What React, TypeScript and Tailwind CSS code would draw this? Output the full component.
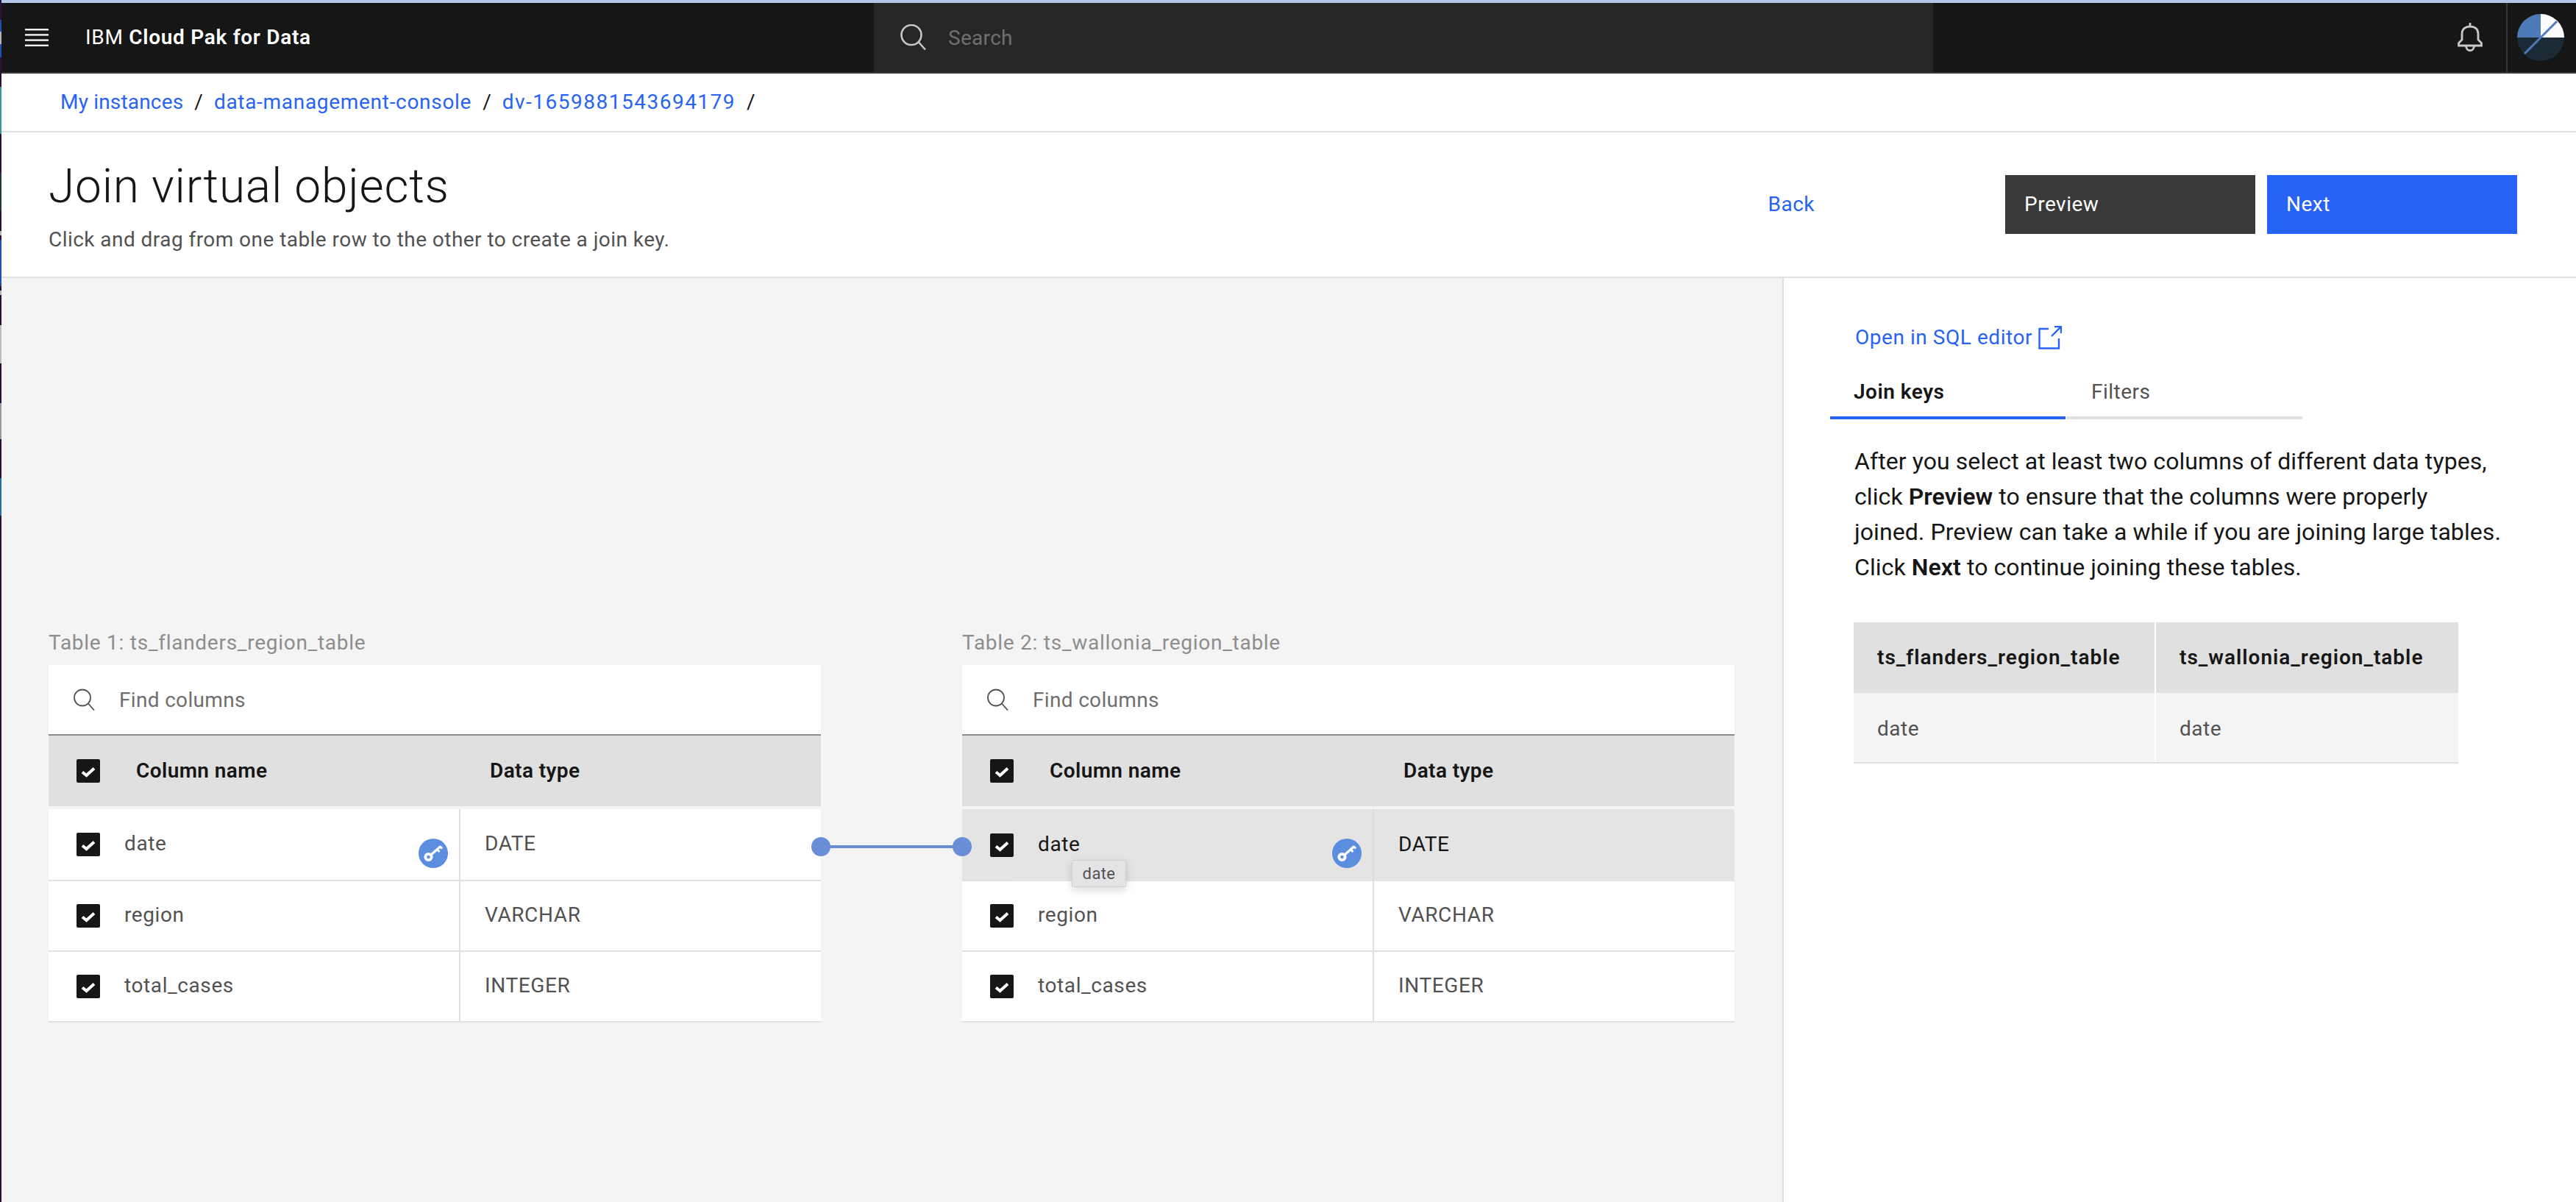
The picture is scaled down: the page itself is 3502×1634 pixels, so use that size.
const font = { fontFamily: '"Roboto", "Liberation Sans", sans-serif' };

// sliver of the desktop showing behind the window, top to bottom
const desktopStrip = [
  ["h-[27px]", "bg-[#2a1040]"],
  ["h-[16px]", "bg-[#1d4fb5]"],
  ["h-[17px]", "bg-[#b5b5b5]"],
  ["h-[18px]", "bg-[#1d4fb5]"],
  ["h-[40px]", "bg-[#2a1040]"],
  ["h-[64px]", "bg-[#3a9a9a]"],
  ["h-[53px]", "bg-[#2a1040]"],
  ["h-[51px]", "bg-[#1f3a3a]"],
  ["h-[28px]", "bg-[#2a1040]"],
  ["h-[6px]", "bg-[#b5b5b5]"],
  ["h-[6px]", "bg-[#2a1040]"],
  ["h-[63px]", "bg-[#1d4fb5]"],
  ["h-[6px]", "bg-[#2a1040]"],
  ["h-[6px]", "bg-[#b5b5b5]"],
  ["h-[41px]", "bg-[#2a1040]"],
  ["h-[52px]", "bg-[#bdbdbd]"],
  ["h-[54px]", "bg-[#2a1040]"],
  ["h-[49px]", "bg-[#9a9a9a]"],
  ["h-[53px]", "bg-[#2a1040]"],
  ["h-[51px]", "bg-[#2070b0]"],
];

function Check() {
  return (
    <span className="size-8 shrink-0 rounded-[2px] bg-[#161616]">
      <svg width="32" height="32" viewBox="0 0 32 32" fill="none">
        <path d="M8 17.5 L13.5 22 L24 12.5" stroke="#fff" strokeWidth="4" />
      </svg>
    </span>
  );
}

function KeyBadge() {
  return (
    <span className="absolute left-[503px] top-[40px] size-10 rounded-full bg-[#5b8ede]">
      <svg width="40" height="40" viewBox="0 0 40 40" fill="none" stroke="#fff">
        <circle cx="13.5" cy="25" r="4.2" strokeWidth="3.8" />
        <path d="M17 22 L30 10.5" strokeWidth="3.2" />
        <path d="M25 14.5 L28.5 18 M29 10.5 L32 13.5" strokeWidth="3" />
      </svg>
    </span>
  );
}

function DataRow({ name, type, selected, keyed, first }: { name: string; type: string; selected?: boolean; keyed?: boolean; first?: boolean }) {
  return (
    <div className={`relative flex ${first ? "h-[98px]" : "h-[96px]"} ${selected ? "bg-[#e4e4e4] text-[#161616]" : "border-b-2 border-[#e0e0e0] bg-white text-[#525252]"}`}>
      <div className={`flex w-[560px] items-center border-r-2 pl-[38px] ${selected ? "border-[#dcdcdc]" : "border-[#e0e0e0]"}`}>
        <Check />
        <span className="ml-[33px] -translate-y-px text-[28px] tracking-[0.6px]">{name}</span>
      </div>
      <span className="ml-[33px] flex -translate-y-px items-center text-[28px] tracking-[0.6px]">{type}</span>
      {keyed && <KeyBadge />}
      {selected && <span className="absolute bottom-0 left-0 h-[2px] w-[70px] bg-[#e0e0e0]" />}
    </div>
  );
}

function JoinTable({ label, selected }: { label: string; selected?: boolean }) {
  return (
    <div className="w-[1050px]">
      <div className="h-[58px] pt-[10px] text-[28px] leading-[36px] tracking-[0.73px] text-[#8d8d8d]">{label}</div>
      <div className="flex h-[96px] items-center border-b-2 border-[#8d8d8d] bg-white pl-[33px]">
        <svg width="30" height="30" viewBox="0 0 30 30" fill="none" stroke="#525252" strokeWidth="1.8">
          <circle cx="13" cy="12.5" r="11" />
          <path d="M21 20.5 L29 29.5" />
        </svg>
        <span className="ml-[33px] translate-y-px text-[28px] tracking-[0.33px] text-[#6f6f6f]">Find columns</span>
      </div>
      <div className="flex h-[96px] items-center bg-[#e0e0e0] pl-[38px] text-[28px] font-semibold tracking-[0.4px] text-[#161616]">
        <Check />
        <span className="ml-[49px] w-[481px]">Column name</span>
        <span>Data type</span>
      </div>
      <div className="h-1" />
      <DataRow name="date" type="DATE" keyed first selected={selected} />
      <DataRow name="region" type="VARCHAR" />
      <DataRow name="total_cases" type="INTEGER" />
    </div>
  );
}

export default function App() {
  return (
    <div className="relative flex h-[1634px] w-[3502px] flex-col overflow-hidden bg-white text-[#161616]" style={font}>
      <div className="absolute left-0 top-0 z-10 flex h-full w-[2px] flex-col bg-[#2a1040]">
        {desktopStrip.map(([h, bg], i) => (
          <span key={i} className={`${h} ${bg}`} />
        ))}
      </div>
      <div className="h-1 bg-[#b4c6e6]" />
      <header className="flex h-[96px] items-stretch border-b-2 border-[#393939] bg-[#161616] text-white">
        <div className="flex w-[116px] items-center pl-[34px]">
          <svg width="32" height="24" viewBox="0 0 32 24" fill="#f4f4f4">
            <rect y="0" width="32" height="2.4" />
            <rect y="7.2" width="32" height="2.4" />
            <rect y="14.4" width="32" height="2.4" />
            <rect y="21.6" width="32" height="2.4" />
          </svg>
        </div>
        <div className="flex w-[1072px] items-center text-[28px] tracking-[0.7px]">
          IBM&nbsp;<span className="font-semibold">Cloud Pak for Data</span>
        </div>
        <div className="flex w-[1440px] items-center bg-[#262626] pl-[35px] text-[#6f6f6f]">
          <svg width="36" height="36" viewBox="0 0 36 36" fill="none" stroke="#c6c6c6" strokeWidth="2.6">
            <circle cx="16" cy="14.5" r="13.5" />
            <path d="M25.5 24 L35 34.5" />
          </svg>
          <span className="ml-[30px] translate-y-px text-[28px] tracking-[0.3px]">Search</span>
        </div>
        <div className="flex w-[779px] items-center pl-[713px]">
          <svg width="34" height="40" viewBox="0 0 34 40" fill="none" stroke="#c8c8c8" strokeWidth="2.8">
            <path d="M17 0 V5 M1.5 31 V27.5 L6 23 V15 C6 8 11 5 17 5 C23 5 28 8 28 15 V23 L32.5 27.5 V31 Z" />
            <path d="M11.5 31 C11.5 40 22.5 40 22.5 31" />
          </svg>
        </div>
        <div className="flex flex-1 items-center border-l-2 border-[#393939] pl-[13px]">
          <svg width="64" height="64" viewBox="0 0 64 64">
            <defs>
              <clipPath id="pie"><circle cx="32" cy="32" r="32" /></clipPath>
            </defs>
            <g clipPath="url(#pie)">
              <rect width="32" height="32" fill="#4f7ab8" />
              <rect x="32" width="32" height="32" fill="#fcfcfc" />
              <rect y="32" width="64" height="32" fill="#1b2a35" />
              <path d="M54 10 L10 54" stroke="#4f7ab8" strokeWidth="3" />
            </g>
          </svg>
        </div>
      </header>

      <nav className="flex h-[80px] items-center border-b-2 border-[#e0e0e0] pl-[82px] text-[28px]">
        <span className="tracking-[0.18px] text-[#2763f6]">My instances</span>
        <span className="mx-[15px]">/</span>
        <span className="tracking-[0.7px] text-[#2763f6]">data-management-console</span>
        <span className="mx-[15px]">/</span>
        <span className="tracking-[1.5px] text-[#2763f6]">dv-1659881543694179</span>
        <span className="mx-[15px]">/</span>
      </nav>

      <section className="flex h-[198px] items-start border-b-2 border-[#e0e0e0]">
        <div className="flex-1 pl-[66px] pt-[35px]">
          <h1 className="text-[64px] font-light leading-[78px] tracking-[0.75px]">Join virtual objects</h1>
          <p className="mt-[15px] text-[28px] leading-[36px] tracking-[0.45px] text-[#525252]">
            Click and drag from one table row to the other to create a join key.
          </p>
        </div>
        <div className="flex items-center pr-[80px] pt-[58px] text-[28px] tracking-[0.5px]">
          <span className="mr-[259px] text-[#2763f6]">Back</span>
          <span className="flex h-[80px] w-[340px] items-center bg-[#393939] pl-[26px] text-white">Preview</span>
          <span className="ml-[16px] flex h-[80px] w-[340px] items-center bg-[#2763f6] pl-[26px] text-white">Next</span>
        </div>
      </section>

      <main className="flex flex-1">
        <div className="relative flex w-[2425px] gap-[192px] border-r-2 border-[#e0e0e0] bg-[#f4f4f4] pl-[66px] pt-[468px]">
          <JoinTable label="Table 1: ts_flanders_region_table" />
          <JoinTable label="Table 2: ts_wallonia_region_table" selected />
          {/* join line between the two tables */}
          <div className="absolute left-[1103px] top-[760px] flex items-center">
            <span className="size-[26px] rounded-full bg-[#6a8ed4]" />
            <span className="h-1 w-[166px] bg-[#6a8ed4]" />
            <span className="size-[26px] rounded-full bg-[#6a8ed4]" />
          </div>
          <div className="absolute left-[1457px] top-[791px] flex h-[37px] w-[74px] items-center justify-center rounded-[2px] border border-[#d0d0d0] bg-[#e4e3e6] text-[22px] tracking-[0.4px] text-[#525252] shadow-[0_4px_12px_rgba(0,0,0,0.15)]">
            date
          </div>
        </div>

        <aside className="flex-1 pl-[63px] pt-[60px]">
          <div className="flex items-center pl-[34px] text-[28px] tracking-[0.55px] text-[#2763f6]">
            Open in SQL editor
            <svg className="ml-2" width="32" height="32" viewBox="0 0 32 32" fill="none" stroke="#2763f6" strokeWidth="2.4">
              <path d="M14 4 H1.5 V30.5 H28 V17 M18 14 L31 1 M22 1 H31 V10" />
            </svg>
          </div>
          <div className="mt-[25px] flex w-[642px] text-[28px] tracking-[0.5px]">
            <div className="h-[65px] w-[320px] border-b-4 border-[#2763f6] pl-[32px] pt-[7px] font-semibold">Join keys</div>
            <div className="ml-[1px] h-[65px] w-[321px] border-b-4 border-[#e0e0e0] pl-[34px] pt-[7px] text-[#525252]">Filters</div>
          </div>
          <div className="ml-[33px] mt-[33px] text-[32px] leading-[48px] tracking-[0.08px]">
            <div>After you select at least two columns of different data types,</div>
            <div>click <b className="font-semibold">Preview</b> to ensure that the columns were properly</div>
            <div>joined. Preview can take a while if you are joining large tables.</div>
            <div>Click <b className="font-semibold">Next</b> to continue joining these tables.</div>
          </div>
          <div className="ml-[32px] mt-[51px] w-[822px] text-[28px]">
            <div className="flex h-[96px] items-center bg-[#e0e0e0] font-semibold tracking-[1px]">
              <span className="w-[409px] pl-[32px]">ts_flanders_region_table</span>
              <span className="h-full w-[2px] bg-white" />
              <span className="pl-[32px]">ts_wallonia_region_table</span>
            </div>
            <div className="flex h-[96px] items-center border-b-2 border-[#e0e0e0] bg-[#f4f4f4] tracking-[0.5px] text-[#525252]">
              <span className="w-[409px] translate-y-0.5 pl-[32px]">date</span>
              <span className="h-full w-[2px] bg-white" />
              <span className="translate-y-0.5 pl-[32px]">date</span>
            </div>
          </div>
        </aside>
      </main>
    </div>
  );
}
